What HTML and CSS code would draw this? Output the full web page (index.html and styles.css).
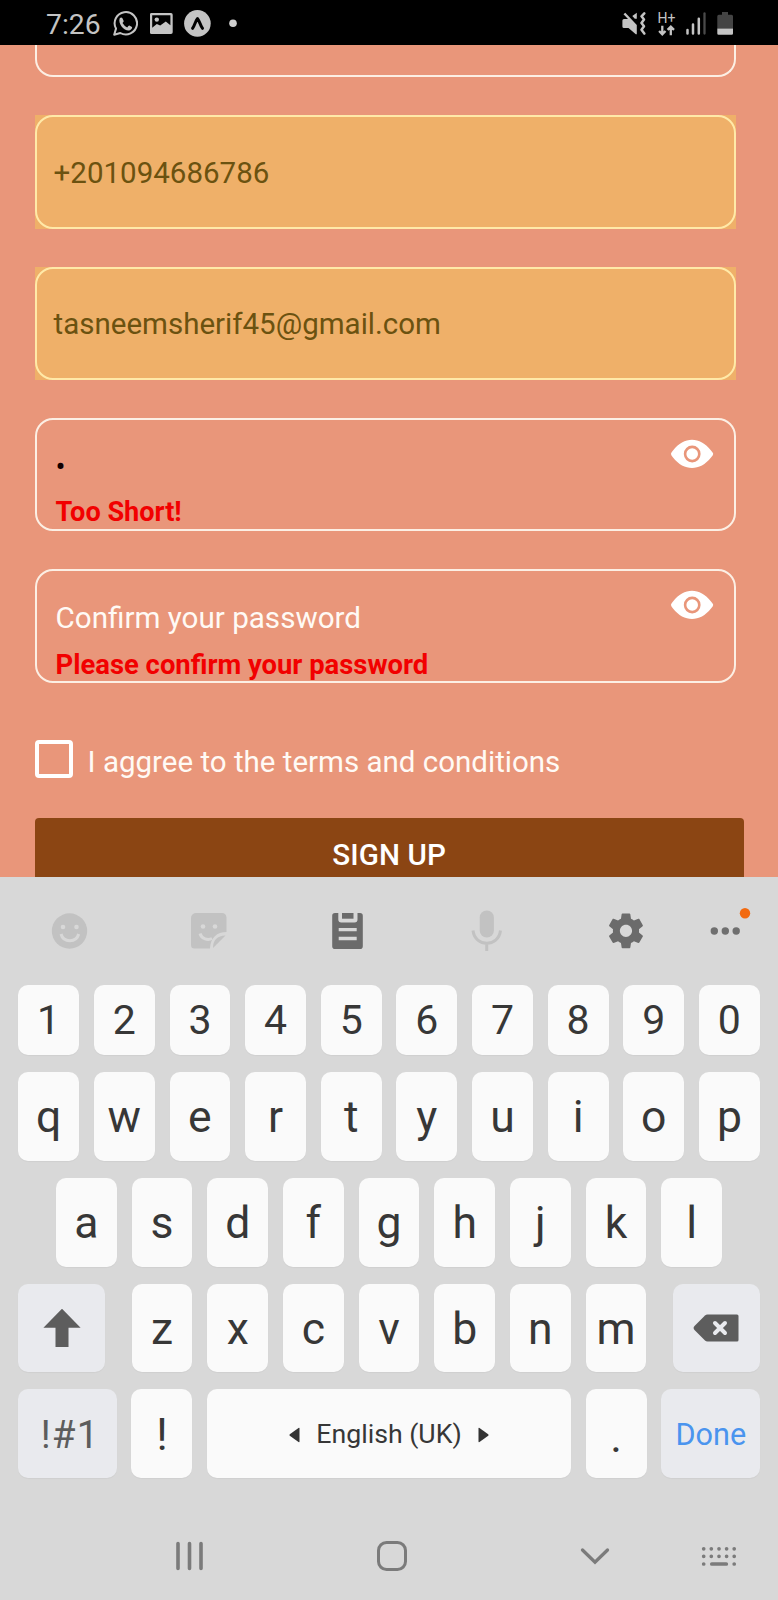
FILE: index.html
```
<!DOCTYPE html>
<html lang="en">
<head>
<meta charset="utf-8">
<title>Sign up</title>
<link rel="stylesheet" href="styles.css">
</head>
<body>
<div class="phone">
  <header class="status">
    <span class="clock">7:26</span>
    <svg class="whatsapp" width="26" height="45" viewBox="112 0 26 45"><path d="M114.200 34.700L116 28.600A11.200 11.200 0 1 1 120.300 33Z" fill="none" stroke="#c4c4c4" stroke-width="2" stroke-linejoin="round"/><path d="M119.600 18.600q1.400-1.700 2.700-.6l1.400 3q.2.700-1.200 2.100 1.700 3 4.700 4.300 1.400-2 2.100-1.800l2.700 1.400c.6.800-.5 3-2.700 3.500-4.300 1-11.400-5.700-9.700-11.900z" fill="#c4c4c4"/></svg>
    <svg class="gallery" width="23" height="45" viewBox="150 0 23 45"><path fill-rule="evenodd" fill="#c4c4c4" d="M151.500 13h19.500a1.700 1.700 0 0 1 1.700 1.700v17.600a1.700 1.700 0 0 1-1.700 1.700h-19.500a1.500 1.500 0 0 1-1.500-1.700v-17.600a1.500 1.500 0 0 1 1.500-1.700zM152.200 15.300v12.400l4.600-3.700 3.400 1.600 5.600-4.200 4.600 3.800v-9.900z"/><circle cx="156.800" cy="19.600" r="2.200" fill="#c4c4c4"/></svg>
    <svg class="expo" width="27" height="45" viewBox="184 0 27 45"><circle cx="197.400" cy="23.400" r="13.300" fill="#c4c4c4"/><path d="M192.600 28.300C194.500 26 195.600 20.500 197.500 18.600C199.400 20.500 200.500 26 202.500 28.300" fill="none" stroke="#000" stroke-width="3" stroke-linecap="round" stroke-linejoin="round"/></svg>
    <svg class="more-dot" width="8" height="45" viewBox="229.500 0 8 45"><circle cx="233.500" cy="23.300" r="3.800" fill="#d0d0d0"/></svg>
    <svg class="mute" width="24" height="45" viewBox="622 0 24 45"><path d="M624 19h4L623.500 14.300L625.300 12.700L636.800 25V34.300L635.800 34.300L628.500 28H624Q622.400 28 622.400 26.500V20.500Q622.400 19 624 19zM632.300 16L636.800 12.700V18.700L634.800 18.700z" fill="#c4c4c4"/><path d="M644.300 13.300L641.500 16.300L644 19.500L641.500 23L644 26.300L641.500 29.800L644.300 33.600" fill="none" stroke="#c4c4c4" stroke-width="2.500" stroke-linecap="round" stroke-linejoin="round"/></svg>
    <svg class="data" width="18" height="45" viewBox="658 0 18 45"><text x="657.500" y="22.500" class="hplus">H+</text><path d="M662.300 25.700v8.500m-3.200-3.200l3.200 3.300 3.200-3.300M670.800 35.200v-8.500m-3.200 3.200l3.200-3.300 3.200 3.300" fill="none" stroke="#c4c4c4" stroke-width="2.300"/></svg>
    <svg class="signal" width="20" height="45" viewBox="685.500 0 20 45"><path d="M687 30V33.500M692.500 24.500v9M698.300 18.700V33.500" stroke="#c4c4c4" stroke-width="2.500" stroke-linecap="round"/><path d="M704 13.500V33.500" stroke="#4a4a4a" stroke-width="2.300" stroke-linecap="round"/></svg>
    <svg class="battery" width="17" height="45" viewBox="717 0 17 45"><path d="M722 12h6v2.700h3.500q1.500 0 1.500 1.500V28.500h-15.700V16.200q0-1.500 1.500-1.500H722z" fill="#444"/><path d="M717.300 28.500H733v5q0 1.300-1.300 1.300h-13.100q-1.300 0-1.300-1.300z" fill="#c4c4c4"/></svg>
  </header>

  <main class="form">
    <div class="field clipped"></div>
    <div class="field filled"><div class="value">+201094686786</div></div>
    <div class="field filled"><div class="value">tasneemsherif45@gmail.com</div></div>
    <div class="field secret">
      <div class="lines"><div class="input bullet">•</div><div class="error short">Too Short!</div></div>
      <svg class="eye" width="44" height="30" viewBox="0 0 44 30"><path d="M1 15Q.8 14 3 11.500C14-3 30-3 41 11.500Q43.200 14 43.200 15Q43.200 16 41 18.500C30 32.500 14 32.500 3 18.500Q1 16 1 15z" fill="#fff"/><circle cx="22.200" cy="15" r="7.100" fill="none" stroke="#e9967a" stroke-width="2.600"/></svg>
    </div>
    <div class="field secret">
      <div class="lines"><div class="input">Confirm your password</div><div class="error">Please confirm your password</div></div>
      <svg class="eye" width="44" height="30" viewBox="0 0 44 30"><path d="M1 15Q.8 14 3 11.500C14-3 30-3 41 11.500Q43.200 14 43.200 15Q43.200 16 41 18.500C30 32.500 14 32.500 3 18.500Q1 16 1 15z" fill="#fff"/><circle cx="22.200" cy="15" r="7.100" fill="none" stroke="#e9967a" stroke-width="2.600"/></svg>
    </div>
    <div class="terms"><span class="box"></span><span class="terms-text">I aggree to the terms and conditions</span></div>
    <div class="submit">SIGN UP</div>
  </main>

  <section class="keyboard">
    <div class="tools">
      <svg width="37" height="36" viewBox="50.500 913 37 36"><circle cx="69" cy="931" r="17.700" fill="#c2c2c2"/><g fill="#d8d8d8"><circle cx="62.500" cy="927" r="2.300"/><circle cx="76" cy="927" r="2.300"/></g><path d="M60.500 934c2.500 9 15.200 9 17.700 0" fill="none" stroke="#d8d8d8" stroke-width="3"/></svg>
      <svg width="36" height="36" viewBox="191 913 36 36"><path d="M196 913h26a4.500 4.500 0 0 1 4.500 4.500V932c-9.500 0-16 5.500-16.500 16.500H194.500a3.500 3.500 0 0 1-3.500-3.500V918a5 5 0 0 1 5-5zM213 948q0-12 12.500-12.500z" fill="#c2c2c2"/><g fill="#d8d8d8"><circle cx="203" cy="926.500" r="2.300"/><circle cx="215" cy="926.500" r="2.300"/></g><path d="M200 933.500c1.500 5.500 8 7 12 5" fill="none" stroke="#d8d8d8" stroke-width="3"/></svg>
      <svg width="32" height="37" viewBox="332 913 32 37"><path fill-rule="evenodd" d="M335 913h3.300v6.500a3 3 0 0 0 3 3h13.200a3 3 0 0 0 3-3V913H360a2.800 2.800 0 0 1 2.800 2.800v30.400a2.800 2.800 0 0 1-2.800 2.800h-25a2.800 2.800 0 0 1-2.800-2.800v-30.400A2.800 2.800 0 0 1 335 913zM338.700 928v3.300h18V928zM338.700 936.700v3.600h18v-3.600z" fill="#6b6b6b"/><path d="M342 913h11.500v5.700H342z" fill="#6b6b6b"/></svg>
      <svg width="32" height="42" viewBox="471 910 32 42"><rect x="479.700" y="910.500" width="14.200" height="27" rx="7" fill="#c2c2c2"/><path d="M473 930.500c2 17 25.500 17 27.500 0M486.700 943.500v7.500" fill="none" stroke="#c2c2c2" stroke-width="3"/></svg>
      <svg width="46" height="46" viewBox="0 0 24 24"><path fill="#6b6b6b" d="M19.430 12.980c.04-.32.070-.64.070-.98s-.03-.66-.07-.98l2.110-1.650c.19-.15.240-.42.120-.64l-2-3.460c-.12-.22-.39-.3-.61-.22l-2.490 1c-.52-.4-1.080-.73-1.690-.98l-.38-2.650C14.460 2.180 14.250 2 14 2h-4c-.25 0-.46.18-.49.42l-.38 2.650c-.61.250-1.170.590-1.690.980l-2.490-1c-.23-.09-.49 0-.61.220l-2 3.460c-.13.220-.07.490.12.640l2.110 1.650c-.04.320-.07.650-.07.980s.03.660.07.980l-2.110 1.650c-.19.150-.24.420-.12.640l2 3.460c.12.220.39.300.61.220l2.490-1c.52.400 1.080.730 1.690.980l.38 2.650c.03.240.24.420.49.420h4c.25 0 .46-.18.490-.42l.38-2.650c.61-.25 1.170-.59 1.690-.98l2.490 1c.23.090.49 0 .61-.22l2-3.460c.12-.22.070-.49-.12-.64l-2.110-1.650zM12 15.500c-1.930 0-3.500-1.570-3.500-3.500s1.570-3.500 3.500-3.500 3.500 1.570 3.500 3.500-1.570 3.500-3.500 3.500z" transform="translate(1.070 1) scale(.91)"/></svg>
      <svg width="83" height="50" viewBox="695 906 83 50"><g fill="#6f6f6f"><circle cx="714.300" cy="931" r="3.700"/><circle cx="725.300" cy="931" r="3.700"/><circle cx="736.200" cy="931" r="3.700"/></g><circle cx="745" cy="913.200" r="5.200" fill="#f26a10"/></svg>
    </div>
    <div class="row digits"><div class="key">1</div><div class="key">2</div><div class="key">3</div><div class="key">4</div><div class="key">5</div><div class="key">6</div><div class="key">7</div><div class="key">8</div><div class="key">9</div><div class="key">0</div></div>
    <div class="row"><div class="key">q</div><div class="key">w</div><div class="key">e</div><div class="key">r</div><div class="key">t</div><div class="key">y</div><div class="key">u</div><div class="key">i</div><div class="key">o</div><div class="key">p</div></div>
    <div class="row"><div class="key">a</div><div class="key">s</div><div class="key">d</div><div class="key">f</div><div class="key">g</div><div class="key">h</div><div class="key">j</div><div class="key">k</div><div class="key">l</div></div>
    <div class="row split">
      <div class="key fn shift"><svg width="38" height="40" viewBox="0 0 38 40"><path d="M19 0.700L37.600 19.700H25.500V39H12.500V19.700H.4z" fill="#5d5d5d"/></svg></div>
      <div class="letters"><div class="key">z</div><div class="key">x</div><div class="key">c</div><div class="key">v</div><div class="key">b</div><div class="key">n</div><div class="key">m</div></div>
      <div class="key fn shift"><svg width="46" height="28" viewBox="-0.500 0 46 28"><path d="M14 .5H43.500a1.500 1.500 0 0 1 1.500 1.500V26a1.500 1.500 0 0 1-1.500 1.500H14q-1.500 0-2.500-1L1 16q-1.800-2 0-4L11.500 1.500q1-1 2.500-1z" fill="#5d5d5d"/><path d="M21.500 9L31.500 19M31.500 9L21.500 19" stroke="#e9eaee" stroke-width="4" stroke-linecap="round"/></svg></div>
    </div>
    <div class="row">
      <div class="key fn wide symbols">!#1</div>
      <div class="key">!</div>
      <div class="key space"><svg width="11" height="16" viewBox="0 0 11 16"><path d="M10.500 1.500v13Q10.500 15.500 9.500 15L.8 8.800Q0 8 .8 7.200L9.500 1Q10.500.5 10.500 1.500z" fill="#333"/></svg><span>English (UK)</span><svg width="11" height="16" viewBox="0 0 11 16"><path d="M.5 1.500v13Q.5 15.500 1.500 15L10.200 8.800Q11 8 10.200 7.200L1.500 1Q.5.500.5 1.500z" fill="#333"/></svg></div>
      <div class="key dot">.</div>
      <div class="key fn wide done">Done</div>
    </div>
  </section>

  <nav class="navbar">
    <svg class="recents" width="28" height="30" viewBox="176 1541 28 30"><path d="M178 1543.500v25M189.500 1543.500v25M201 1543.500v25" stroke="#7b7b7b" stroke-width="3.600" stroke-linecap="round"/></svg>
    <svg class="home" width="32" height="32" viewBox="376 1540 32 32"><rect x="378.500" y="1542.500" width="27" height="27" rx="8" fill="none" stroke="#7b7b7b" stroke-width="3"/></svg>
    <svg class="hide" width="30" height="20" viewBox="580 1546 30 20"><path d="M582.500 1550L595 1562.300L607.500 1550" fill="none" stroke="#7b7b7b" stroke-width="3.300" stroke-linecap="round"/></svg>
    <svg class="switcher" width="36" height="22" viewBox="701 1546 36 22"><path d="M703.700 1549.800h0M711.300 1549.800h0M719 1549.800h0M726.600 1549.800h0M734.200 1549.800h0M703.700 1557.300h0M711.300 1557.300h0M719 1557.300h0M726.600 1557.300h0M734.200 1557.300h0M703.700 1565h0M711.800 1565h14.500M734.200 1565h0" stroke="#7b7b7b" stroke-width="3.700" stroke-linecap="round"/></svg>
  </nav>
</div>
</body>
</html>
```
FILE: styles.css
```
* { box-sizing: border-box; }
body { margin: 0; font-family: Roboto, "Liberation Sans", sans-serif; }
svg { display: block; flex: none; }
.phone { width: 778px; height: 1600px; overflow: hidden; display: flex; flex-direction: column; background: #d8d8d8; }

.status { height: 45px; flex: none; background: #000; display: flex; align-items: center; padding-left: 46px; }
.clock { color: #c4c4c4; font-size: 28.3px; line-height: 45px; width: 66px; padding-top: 4px; }
.gallery { margin-left: 12px; }
.expo { margin-left: 11px; }
.more-dot { margin-left: 18px; }
.mute { margin-left: 385px; }
.data { margin-left: 12px; }
.signal { margin-left: 9.5px; }
.battery { margin-left: 11.5px; }
.hplus { font-size: 14px; fill: #c4c4c4; }

.form { height: 832px; flex: none; overflow: hidden; background: #e9967a; padding-left: 34.6px; display: flex; flex-direction: column; position: relative; z-index: 0; }
.field { width: 701.4px; height: 113.5px; flex: none; margin-bottom: 37.9px; border: 2px solid #fcefe4; border-radius: 18px; display: flex; justify-content: space-between; }
.clipped { height: 32.3px; border-top: 0; border-radius: 0 0 18px 18px; }
/* the autofill highlight is a square layer behind the rounded border */
.filled { position: relative; align-items: center; padding-left: 17px; border-color: #ffe9a8; background: #efb069; }
.filled::before { content: ""; position: absolute; inset: -2px; background: #efb069; z-index: -1; }
.value { font-size: 29.5px; line-height: 34px; color: #6b5210; padding-top: 2px; }
.lines { padding: 29px 0 0 19px; }
.input { font-size: 29.6px; line-height: 36px; height: 36px; color: #fffaf5; }
.bullet { color: #100; }
.error { font-size: 27.4px; line-height: 32px; margin-top: 13px; font-weight: 700; color: #f20000; white-space: nowrap; }
.short { font-size: 27.1px; margin-top: 11px; }
.eye { margin: 19px 19.5px 0 0; }
.terms { height: 38px; flex: none; margin: 19px 0 40.3px; display: flex; color: #fffaf5; }
.box { width: 38px; height: 38px; border: 4px solid #fff; border-radius: 4px; }
.terms-text { margin-left: 15px; font-size: 29.5px; line-height: 38px; padding-top: 3px; }
.submit { height: 80px; flex: none; width: 709px; border-radius: 4px 4px 0 0; background: #8b4513; color: #fff; font-size: 29.6px; font-weight: 500; line-height: 36px; letter-spacing: .1px; padding-top: 19px; text-align: center; }

.keyboard { flex: none; height: 602px; }
.tools { height: 108px; display: grid; grid-template-columns: repeat(5, 139px) 83px; align-items: center; justify-items: center; }
.row { display: flex; justify-content: center; gap: 14.85px; height: 88.8px; margin-bottom: 17px; }
.digits { height: 69.6px; margin-bottom: 17.4px; }
.key { width: 60.8px; border-radius: 10px; background: #fafafa; color: #373737; font-size: 44.5px; display: flex; align-items: center; justify-content: center; line-height: 1; padding-top: 2px; box-shadow: 0 1px 1px rgba(0, 0, 0, .04); }
.digits .key { font-size: 41px; }
.fn { background: #e9eaee; }
.split { justify-content: space-between; padding: 0 18px; }
.letters { display: flex; gap: 14.85px; }
.shift { width: 87.4px; padding-top: 0; }
.wide { width: 99px; }
.symbols { font-size: 38.5px; letter-spacing: 1.2px; padding-left: 6px; color: #5d5d5d; }
.space { width: 363.75px; font-size: 26.7px; gap: 16px; }
.dot { padding-top: 7px; }
.done { font-size: 30.6px; padding-top: 4px; color: #4a94ee; }

.navbar { flex: none; height: 121px; padding: 33px 0 0 176px; display: flex; align-items: center; }
.home { margin-left: 172px; }
.hide { margin-left: 172px; }
.switcher { margin-left: 91px; }
```
